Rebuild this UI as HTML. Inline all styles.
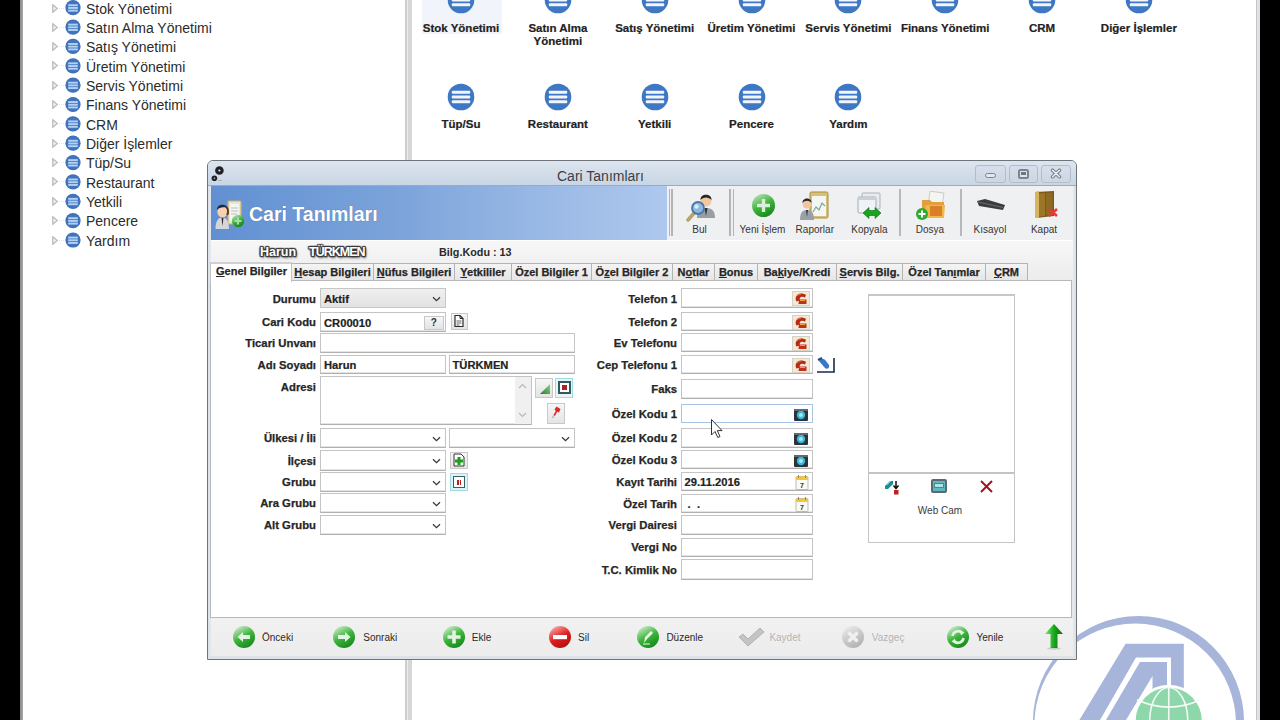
<!DOCTYPE html><html><head><meta charset="utf-8"><title>Cari Tanımları</title><style>
*{box-sizing:border-box;margin:0;padding:0}
html,body{width:1280px;height:720px;overflow:hidden;background:#fff;font-family:"Liberation Sans",sans-serif;color:#222}
.a{position:absolute}
.tr{position:absolute;left:0;height:20px;width:380px}
.tr .tri{position:absolute;left:52px;top:6px;width:6px;height:9px}
.tr .dot{position:absolute;left:59px;top:10px;width:5px;border-top:1px dotted #e4e4e4}
.tr .ic{position:absolute;left:65.5px;top:2.6px;width:15.2px;height:15.2px;border-radius:50%;background:radial-gradient(circle at 50% 45%,#4378c0 55%,#30619f 100%)}
.tr .ic i{position:absolute;left:2.6px;width:10px;height:2px;background:#b0d2f6}
.tr .tx{position:absolute;left:86px;top:1px;font-size:14px;line-height:20px;color:#2b2b2b;white-space:nowrap}
.gi{position:absolute;width:0;height:0}
.gi .ic{position:absolute;left:-13px;top:-13px;width:26px;height:26px;border-radius:50%;background:#3e77c3}
.gi .ic i{position:absolute;left:4px;width:18px;height:3px;background:#f0f4fb}
.gi .lb{position:absolute;left:-60px;width:120px;text-align:center;font-size:11.5px;font-weight:bold;line-height:13px;color:#222;-webkit-text-stroke:0.2px #222;white-space:nowrap}
.lbl{position:absolute;font-size:11.3px;font-weight:bold;color:#262626;-webkit-text-stroke:0.25px #262626;text-align:right;white-space:nowrap;line-height:14px}
.inp{position:absolute;background:#fff;border:1px solid #c4c4c4;border-bottom-color:#b0b0b0;box-shadow:inset 0 -1px 0 #e4e4e4}
.val{position:absolute;left:3px;top:3px;font-size:11.2px;font-weight:bold;color:#222;-webkit-text-stroke:0.2px #222;line-height:13px;white-space:nowrap}
.chev{position:absolute;right:4px;top:7px;width:9px;height:6px}
.tab{position:absolute;top:263px;height:17px;border:1px solid #b4b4b4;border-bottom:none;background:linear-gradient(#f4f4f4,#e6e6e6);font-size:11px;font-weight:bold;color:#262626;-webkit-text-stroke:0.25px #262626;text-align:center;line-height:16px;white-space:nowrap}
.tab u{text-decoration:underline}
.tb{position:absolute;top:186px;height:54px;text-align:center}
.tbl{position:absolute;font-size:10px;color:#333;white-space:nowrap;line-height:12px;text-align:center}
.bb{position:absolute;font-size:10px;color:#2a2a2a;white-space:nowrap;line-height:12px}
.btn{position:absolute;border:1px solid #c8c8c8;background:linear-gradient(#f6f6f6,#e4e4e4)}
</style></head><body>
<div class="a" style="left:0;top:0;width:20px;height:720px;background:#000"></div>
<div class="a" style="left:20px;top:0;width:3px;height:720px;background:linear-gradient(90deg,#8c8c8c,#a6a6a6)"></div>
<div class="a" style="left:1260px;top:0;width:20px;height:720px;background:#000"></div>
<div class="a" style="left:1256px;top:0;width:1px;height:720px;background:#c4c4c8"></div>
<div class="a" style="left:1257px;top:0;width:3px;height:720px;background:#e0e0e4"></div>
<div class="a" style="left:405px;top:0;width:2px;height:720px;background:#cdcdcd"></div>
<div class="a" style="left:407px;top:0;width:1px;height:720px;background:#ededed"></div>
<div class="a" style="left:408px;top:0;width:4px;height:720px;background:#d7d7d7"></div>
<div class="tr" style="top:-2.00px"><svg class="tri" viewBox="0 0 6 9"><path d="M0.8 0.8 L5.2 4.5 L0.8 8.2 Z" fill="#f4f4f4" stroke="#bdbdbd" stroke-width="1.4"/></svg><div class="dot"></div><svg style="position:absolute;left:63px;top:0" width="20" height="20" viewBox="0 0 20 20"><circle cx="10" cy="9.70" r="7.6" fill="#3d6fb6"/><circle cx="10" cy="9.70" r="7" fill="#4274bd"/><rect x="5.2" y="6.30" width="9.6" height="1.9" fill="#b2d3f6"/><rect x="5.2" y="9.00" width="9.6" height="1.9" fill="#b2d3f6"/><rect x="5.2" y="11.70" width="9.6" height="1.9" fill="#b2d3f6"/></svg><div class="tx" style="top:0.50px">Stok Yönetimi</div></div>
<div class="tr" style="top:17.00px"><svg class="tri" viewBox="0 0 6 9"><path d="M0.8 0.8 L5.2 4.5 L0.8 8.2 Z" fill="#f4f4f4" stroke="#bdbdbd" stroke-width="1.4"/></svg><div class="dot"></div><svg style="position:absolute;left:63px;top:0" width="20" height="20" viewBox="0 0 20 20"><circle cx="10" cy="10.06" r="7.6" fill="#3d6fb6"/><circle cx="10" cy="10.06" r="7" fill="#4274bd"/><rect x="5.2" y="6.66" width="9.6" height="1.9" fill="#b2d3f6"/><rect x="5.2" y="9.36" width="9.6" height="1.9" fill="#b2d3f6"/><rect x="5.2" y="12.06" width="9.6" height="1.9" fill="#b2d3f6"/></svg><div class="tx" style="top:0.86px">Satın Alma Yönetimi</div></div>
<div class="tr" style="top:36.00px"><svg class="tri" viewBox="0 0 6 9"><path d="M0.8 0.8 L5.2 4.5 L0.8 8.2 Z" fill="#f4f4f4" stroke="#bdbdbd" stroke-width="1.4"/></svg><div class="dot"></div><svg style="position:absolute;left:63px;top:0" width="20" height="20" viewBox="0 0 20 20"><circle cx="10" cy="10.42" r="7.6" fill="#3d6fb6"/><circle cx="10" cy="10.42" r="7" fill="#4274bd"/><rect x="5.2" y="7.02" width="9.6" height="1.9" fill="#b2d3f6"/><rect x="5.2" y="9.72" width="9.6" height="1.9" fill="#b2d3f6"/><rect x="5.2" y="12.42" width="9.6" height="1.9" fill="#b2d3f6"/></svg><div class="tx" style="top:1.22px">Satış Yönetimi</div></div>
<div class="tr" style="top:55.00px"><svg class="tri" viewBox="0 0 6 9"><path d="M0.8 0.8 L5.2 4.5 L0.8 8.2 Z" fill="#f4f4f4" stroke="#bdbdbd" stroke-width="1.4"/></svg><div class="dot"></div><svg style="position:absolute;left:63px;top:0" width="20" height="20" viewBox="0 0 20 20"><circle cx="10" cy="10.78" r="7.6" fill="#3d6fb6"/><circle cx="10" cy="10.78" r="7" fill="#4274bd"/><rect x="5.2" y="7.38" width="9.6" height="1.9" fill="#b2d3f6"/><rect x="5.2" y="10.08" width="9.6" height="1.9" fill="#b2d3f6"/><rect x="5.2" y="12.78" width="9.6" height="1.9" fill="#b2d3f6"/></svg><div class="tx" style="top:1.58px">Üretim Yönetimi</div></div>
<div class="tr" style="top:75.00px"><svg class="tri" viewBox="0 0 6 9"><path d="M0.8 0.8 L5.2 4.5 L0.8 8.2 Z" fill="#f4f4f4" stroke="#bdbdbd" stroke-width="1.4"/></svg><div class="dot"></div><svg style="position:absolute;left:63px;top:0" width="20" height="20" viewBox="0 0 20 20"><circle cx="10" cy="10.14" r="7.6" fill="#3d6fb6"/><circle cx="10" cy="10.14" r="7" fill="#4274bd"/><rect x="5.2" y="6.74" width="9.6" height="1.9" fill="#b2d3f6"/><rect x="5.2" y="9.44" width="9.6" height="1.9" fill="#b2d3f6"/><rect x="5.2" y="12.14" width="9.6" height="1.9" fill="#b2d3f6"/></svg><div class="tx" style="top:0.94px">Servis Yönetimi</div></div>
<div class="tr" style="top:94.00px"><svg class="tri" viewBox="0 0 6 9"><path d="M0.8 0.8 L5.2 4.5 L0.8 8.2 Z" fill="#f4f4f4" stroke="#bdbdbd" stroke-width="1.4"/></svg><div class="dot"></div><svg style="position:absolute;left:63px;top:0" width="20" height="20" viewBox="0 0 20 20"><circle cx="10" cy="10.50" r="7.6" fill="#3d6fb6"/><circle cx="10" cy="10.50" r="7" fill="#4274bd"/><rect x="5.2" y="7.10" width="9.6" height="1.9" fill="#b2d3f6"/><rect x="5.2" y="9.80" width="9.6" height="1.9" fill="#b2d3f6"/><rect x="5.2" y="12.50" width="9.6" height="1.9" fill="#b2d3f6"/></svg><div class="tx" style="top:1.30px">Finans Yönetimi</div></div>
<div class="tr" style="top:113.00px"><svg class="tri" viewBox="0 0 6 9"><path d="M0.8 0.8 L5.2 4.5 L0.8 8.2 Z" fill="#f4f4f4" stroke="#bdbdbd" stroke-width="1.4"/></svg><div class="dot"></div><svg style="position:absolute;left:63px;top:0" width="20" height="20" viewBox="0 0 20 20"><circle cx="10" cy="10.86" r="7.6" fill="#3d6fb6"/><circle cx="10" cy="10.86" r="7" fill="#4274bd"/><rect x="5.2" y="7.46" width="9.6" height="1.9" fill="#b2d3f6"/><rect x="5.2" y="10.16" width="9.6" height="1.9" fill="#b2d3f6"/><rect x="5.2" y="12.86" width="9.6" height="1.9" fill="#b2d3f6"/></svg><div class="tx" style="top:1.66px">CRM</div></div>
<div class="tr" style="top:133.00px"><svg class="tri" viewBox="0 0 6 9"><path d="M0.8 0.8 L5.2 4.5 L0.8 8.2 Z" fill="#f4f4f4" stroke="#bdbdbd" stroke-width="1.4"/></svg><div class="dot"></div><svg style="position:absolute;left:63px;top:0" width="20" height="20" viewBox="0 0 20 20"><circle cx="10" cy="10.22" r="7.6" fill="#3d6fb6"/><circle cx="10" cy="10.22" r="7" fill="#4274bd"/><rect x="5.2" y="6.82" width="9.6" height="1.9" fill="#b2d3f6"/><rect x="5.2" y="9.52" width="9.6" height="1.9" fill="#b2d3f6"/><rect x="5.2" y="12.22" width="9.6" height="1.9" fill="#b2d3f6"/></svg><div class="tx" style="top:1.02px">Diğer İşlemler</div></div>
<div class="tr" style="top:152.00px"><svg class="tri" viewBox="0 0 6 9"><path d="M0.8 0.8 L5.2 4.5 L0.8 8.2 Z" fill="#f4f4f4" stroke="#bdbdbd" stroke-width="1.4"/></svg><div class="dot"></div><svg style="position:absolute;left:63px;top:0" width="20" height="20" viewBox="0 0 20 20"><circle cx="10" cy="10.58" r="7.6" fill="#3d6fb6"/><circle cx="10" cy="10.58" r="7" fill="#4274bd"/><rect x="5.2" y="7.18" width="9.6" height="1.9" fill="#b2d3f6"/><rect x="5.2" y="9.88" width="9.6" height="1.9" fill="#b2d3f6"/><rect x="5.2" y="12.58" width="9.6" height="1.9" fill="#b2d3f6"/></svg><div class="tx" style="top:1.38px">Tüp/Su</div></div>
<div class="tr" style="top:171.00px"><svg class="tri" viewBox="0 0 6 9"><path d="M0.8 0.8 L5.2 4.5 L0.8 8.2 Z" fill="#f4f4f4" stroke="#bdbdbd" stroke-width="1.4"/></svg><div class="dot"></div><svg style="position:absolute;left:63px;top:0" width="20" height="20" viewBox="0 0 20 20"><circle cx="10" cy="10.94" r="7.6" fill="#3d6fb6"/><circle cx="10" cy="10.94" r="7" fill="#4274bd"/><rect x="5.2" y="7.54" width="9.6" height="1.9" fill="#b2d3f6"/><rect x="5.2" y="10.24" width="9.6" height="1.9" fill="#b2d3f6"/><rect x="5.2" y="12.94" width="9.6" height="1.9" fill="#b2d3f6"/></svg><div class="tx" style="top:1.74px">Restaurant</div></div>
<div class="tr" style="top:191.00px"><svg class="tri" viewBox="0 0 6 9"><path d="M0.8 0.8 L5.2 4.5 L0.8 8.2 Z" fill="#f4f4f4" stroke="#bdbdbd" stroke-width="1.4"/></svg><div class="dot"></div><svg style="position:absolute;left:63px;top:0" width="20" height="20" viewBox="0 0 20 20"><circle cx="10" cy="10.30" r="7.6" fill="#3d6fb6"/><circle cx="10" cy="10.30" r="7" fill="#4274bd"/><rect x="5.2" y="6.90" width="9.6" height="1.9" fill="#b2d3f6"/><rect x="5.2" y="9.60" width="9.6" height="1.9" fill="#b2d3f6"/><rect x="5.2" y="12.30" width="9.6" height="1.9" fill="#b2d3f6"/></svg><div class="tx" style="top:1.10px">Yetkili</div></div>
<div class="tr" style="top:210.00px"><svg class="tri" viewBox="0 0 6 9"><path d="M0.8 0.8 L5.2 4.5 L0.8 8.2 Z" fill="#f4f4f4" stroke="#bdbdbd" stroke-width="1.4"/></svg><div class="dot"></div><svg style="position:absolute;left:63px;top:0" width="20" height="20" viewBox="0 0 20 20"><circle cx="10" cy="10.66" r="7.6" fill="#3d6fb6"/><circle cx="10" cy="10.66" r="7" fill="#4274bd"/><rect x="5.2" y="7.26" width="9.6" height="1.9" fill="#b2d3f6"/><rect x="5.2" y="9.96" width="9.6" height="1.9" fill="#b2d3f6"/><rect x="5.2" y="12.66" width="9.6" height="1.9" fill="#b2d3f6"/></svg><div class="tx" style="top:1.46px">Pencere</div></div>
<div class="tr" style="top:230.00px"><svg class="tri" viewBox="0 0 6 9"><path d="M0.8 0.8 L5.2 4.5 L0.8 8.2 Z" fill="#f4f4f4" stroke="#bdbdbd" stroke-width="1.4"/></svg><div class="dot"></div><svg style="position:absolute;left:63px;top:0" width="20" height="20" viewBox="0 0 20 20"><circle cx="10" cy="10.02" r="7.6" fill="#3d6fb6"/><circle cx="10" cy="10.02" r="7" fill="#4274bd"/><rect x="5.2" y="6.62" width="9.6" height="1.9" fill="#b2d3f6"/><rect x="5.2" y="9.32" width="9.6" height="1.9" fill="#b2d3f6"/><rect x="5.2" y="12.02" width="9.6" height="1.9" fill="#b2d3f6"/></svg><div class="tx" style="top:0.82px">Yardım</div></div>
<div class="a" style="left:422px;top:0;width:80px;height:34px;background:#f1f4fa"></div>
<div class="gi" style="left:461.0px;top:-0.5px"><svg style="position:absolute;left:-15px;top:-15px" width="30" height="30" viewBox="-15 -15 30 30"><circle cx="0" cy="0" r="13.3" fill="#3e77c3"/><rect x="-9.2" y="-6.2" width="18.4" height="3" rx="1" fill="#f2f6fc"/><rect x="-9.2" y="-1.5" width="18.4" height="3" rx="1" fill="#f2f6fc"/><rect x="-9.2" y="3.2" width="18.4" height="3" rx="1" fill="#f2f6fc"/></svg><div class="lb" style="top:22.3px">Stok Yönetimi</div></div>
<div class="gi" style="left:557.9px;top:-0.5px"><svg style="position:absolute;left:-15px;top:-15px" width="30" height="30" viewBox="-15 -15 30 30"><circle cx="0" cy="0" r="13.3" fill="#3e77c3"/><rect x="-9.2" y="-6.2" width="18.4" height="3" rx="1" fill="#f2f6fc"/><rect x="-9.2" y="-1.5" width="18.4" height="3" rx="1" fill="#f2f6fc"/><rect x="-9.2" y="3.2" width="18.4" height="3" rx="1" fill="#f2f6fc"/></svg><div class="lb" style="top:22.3px">Satın Alma<br>Yönetimi</div></div>
<div class="gi" style="left:654.7px;top:-0.5px"><svg style="position:absolute;left:-15px;top:-15px" width="30" height="30" viewBox="-15 -15 30 30"><circle cx="0" cy="0" r="13.3" fill="#3e77c3"/><rect x="-9.2" y="-6.2" width="18.4" height="3" rx="1" fill="#f2f6fc"/><rect x="-9.2" y="-1.5" width="18.4" height="3" rx="1" fill="#f2f6fc"/><rect x="-9.2" y="3.2" width="18.4" height="3" rx="1" fill="#f2f6fc"/></svg><div class="lb" style="top:22.3px">Satış Yönetimi</div></div>
<div class="gi" style="left:751.5px;top:-0.5px"><svg style="position:absolute;left:-15px;top:-15px" width="30" height="30" viewBox="-15 -15 30 30"><circle cx="0" cy="0" r="13.3" fill="#3e77c3"/><rect x="-9.2" y="-6.2" width="18.4" height="3" rx="1" fill="#f2f6fc"/><rect x="-9.2" y="-1.5" width="18.4" height="3" rx="1" fill="#f2f6fc"/><rect x="-9.2" y="3.2" width="18.4" height="3" rx="1" fill="#f2f6fc"/></svg><div class="lb" style="top:22.3px">Üretim Yönetimi</div></div>
<div class="gi" style="left:848.4px;top:-0.5px"><svg style="position:absolute;left:-15px;top:-15px" width="30" height="30" viewBox="-15 -15 30 30"><circle cx="0" cy="0" r="13.3" fill="#3e77c3"/><rect x="-9.2" y="-6.2" width="18.4" height="3" rx="1" fill="#f2f6fc"/><rect x="-9.2" y="-1.5" width="18.4" height="3" rx="1" fill="#f2f6fc"/><rect x="-9.2" y="3.2" width="18.4" height="3" rx="1" fill="#f2f6fc"/></svg><div class="lb" style="top:22.3px">Servis Yönetimi</div></div>
<div class="gi" style="left:945.2px;top:-0.5px"><svg style="position:absolute;left:-15px;top:-15px" width="30" height="30" viewBox="-15 -15 30 30"><circle cx="0" cy="0" r="13.3" fill="#3e77c3"/><rect x="-9.2" y="-6.2" width="18.4" height="3" rx="1" fill="#f2f6fc"/><rect x="-9.2" y="-1.5" width="18.4" height="3" rx="1" fill="#f2f6fc"/><rect x="-9.2" y="3.2" width="18.4" height="3" rx="1" fill="#f2f6fc"/></svg><div class="lb" style="top:22.3px">Finans Yönetimi</div></div>
<div class="gi" style="left:1042.1px;top:-0.5px"><svg style="position:absolute;left:-15px;top:-15px" width="30" height="30" viewBox="-15 -15 30 30"><circle cx="0" cy="0" r="13.3" fill="#3e77c3"/><rect x="-9.2" y="-6.2" width="18.4" height="3" rx="1" fill="#f2f6fc"/><rect x="-9.2" y="-1.5" width="18.4" height="3" rx="1" fill="#f2f6fc"/><rect x="-9.2" y="3.2" width="18.4" height="3" rx="1" fill="#f2f6fc"/></svg><div class="lb" style="top:22.3px">CRM</div></div>
<div class="gi" style="left:1138.9px;top:-0.5px"><svg style="position:absolute;left:-15px;top:-15px" width="30" height="30" viewBox="-15 -15 30 30"><circle cx="0" cy="0" r="13.3" fill="#3e77c3"/><rect x="-9.2" y="-6.2" width="18.4" height="3" rx="1" fill="#f2f6fc"/><rect x="-9.2" y="-1.5" width="18.4" height="3" rx="1" fill="#f2f6fc"/><rect x="-9.2" y="3.2" width="18.4" height="3" rx="1" fill="#f2f6fc"/></svg><div class="lb" style="top:22.3px">Diğer İşlemler</div></div>
<div class="gi" style="left:461.0px;top:96.7px"><svg style="position:absolute;left:-15px;top:-15px" width="30" height="30" viewBox="-15 -15 30 30"><circle cx="0" cy="0" r="13.3" fill="#3e77c3"/><rect x="-9.2" y="-6.2" width="18.4" height="3" rx="1" fill="#f2f6fc"/><rect x="-9.2" y="-1.5" width="18.4" height="3" rx="1" fill="#f2f6fc"/><rect x="-9.2" y="3.2" width="18.4" height="3" rx="1" fill="#f2f6fc"/></svg><div class="lb" style="top:21.8px">Tüp/Su</div></div>
<div class="gi" style="left:557.9px;top:96.7px"><svg style="position:absolute;left:-15px;top:-15px" width="30" height="30" viewBox="-15 -15 30 30"><circle cx="0" cy="0" r="13.3" fill="#3e77c3"/><rect x="-9.2" y="-6.2" width="18.4" height="3" rx="1" fill="#f2f6fc"/><rect x="-9.2" y="-1.5" width="18.4" height="3" rx="1" fill="#f2f6fc"/><rect x="-9.2" y="3.2" width="18.4" height="3" rx="1" fill="#f2f6fc"/></svg><div class="lb" style="top:21.8px">Restaurant</div></div>
<div class="gi" style="left:654.7px;top:96.7px"><svg style="position:absolute;left:-15px;top:-15px" width="30" height="30" viewBox="-15 -15 30 30"><circle cx="0" cy="0" r="13.3" fill="#3e77c3"/><rect x="-9.2" y="-6.2" width="18.4" height="3" rx="1" fill="#f2f6fc"/><rect x="-9.2" y="-1.5" width="18.4" height="3" rx="1" fill="#f2f6fc"/><rect x="-9.2" y="3.2" width="18.4" height="3" rx="1" fill="#f2f6fc"/></svg><div class="lb" style="top:21.8px">Yetkili</div></div>
<div class="gi" style="left:751.5px;top:96.7px"><svg style="position:absolute;left:-15px;top:-15px" width="30" height="30" viewBox="-15 -15 30 30"><circle cx="0" cy="0" r="13.3" fill="#3e77c3"/><rect x="-9.2" y="-6.2" width="18.4" height="3" rx="1" fill="#f2f6fc"/><rect x="-9.2" y="-1.5" width="18.4" height="3" rx="1" fill="#f2f6fc"/><rect x="-9.2" y="3.2" width="18.4" height="3" rx="1" fill="#f2f6fc"/></svg><div class="lb" style="top:21.8px">Pencere</div></div>
<div class="gi" style="left:848.4px;top:96.7px"><svg style="position:absolute;left:-15px;top:-15px" width="30" height="30" viewBox="-15 -15 30 30"><circle cx="0" cy="0" r="13.3" fill="#3e77c3"/><rect x="-9.2" y="-6.2" width="18.4" height="3" rx="1" fill="#f2f6fc"/><rect x="-9.2" y="-1.5" width="18.4" height="3" rx="1" fill="#f2f6fc"/><rect x="-9.2" y="3.2" width="18.4" height="3" rx="1" fill="#f2f6fc"/></svg><div class="lb" style="top:21.8px">Yardım</div></div>
<svg class="a" style="left:1000px;top:590px" width="260" height="130" viewBox="1000 590 260 130">
<path fill-rule="evenodd" fill="#a6b5d9" d="M 1033.0 721.5 a 105.5 105.5 0 1 0 211 0 a 105.5 105.5 0 1 0 -211 0 Z M 1034.5 724.25 a 100.75 100.75 0 1 0 201.5 0 a 100.75 100.75 0 1 0 -201.5 0 Z"/>
<path fill="#a6b5d9" d="M1125.6 643.7 L1183.8 643.7 L1183.8 690 L1171 690 L1171 657.5 L1136 657.5 L1100 720 L1079.4 720 Z"/>
<path fill="#a6b5d9" d="M1140 662 L1167 662 L1167 690 L1152.5 690 L1152.5 676 L1126 720 L1106 720 Z"/>
<circle cx="1168.75" cy="720.5" r="35.8" fill="#fff"/>
<circle cx="1168.75" cy="720.5" r="33" fill="#8dd7ab"/>
<g fill="none" stroke="#f4fbf6" stroke-width="1.6">
<path d="M1168.75 687 V720"/>
<ellipse cx="1168.75" cy="720.5" rx="19" ry="33"/>
<path d="M1137 699.7 Q1168.75 714.5 1200.5 699.7"/>
</g>
</svg>
<div class="a" style="left:207px;top:160px;width:870px;height:500px;border:1px solid #6f747a;border-radius:6px 6px 0 0;background:#e2e6eb"></div>
<div class="a" style="left:208px;top:161px;width:868px;height:25px;border-radius:5px 5px 0 0;background:linear-gradient(#dde5ef,#d0dbe8 60%,#c8d5e4)"></div>
<div class="a" style="left:208px;top:185px;width:868px;height:1px;background:#9aabc0"></div>
<div class="a" style="left:208px;top:186px;width:3px;height:473px;background:linear-gradient(90deg,#d9e0e8,#e6e9ee)"></div>
<div class="a" style="left:1073px;top:186px;width:3px;height:473px;background:linear-gradient(90deg,#e6e9ee,#d9e0e8)"></div>
<div class="a" style="left:208px;top:656px;width:868px;height:3px;background:#dfe3e8"></div>
<svg class="a" style="left:210px;top:165px" width="16" height="18" viewBox="0 0 16 18"><circle cx="9.4" cy="5.5" r="4.3" fill="#1e2228"/><circle cx="9.4" cy="5.5" r="1.1" fill="#dfe6ee"/><circle cx="4.4" cy="13.3" r="2.8" fill="#1e2228"/><circle cx="4.4" cy="13.3" r="0.8" fill="#b8c4d2"/><rect x="8" y="15" width="4" height="1" fill="#a8b0ba"/></svg>
<div class="a" style="left:540px;top:167.5px;width:150px;font-size:14px;line-height:17px;color:#3a3f46;white-space:nowrap;text-align:left;padding-left:17px">Cari Tanımları</div>
<div class="a" style="left:975px;top:165px;width:31px;height:18px;border:1px solid #b2bdca;border-radius:3px;background:linear-gradient(#d6dfea,#ccd7e4)"></div>
<div class="a" style="left:1009px;top:165px;width:29px;height:18px;border:1px solid #b2bdca;border-radius:3px;background:linear-gradient(#d6dfea,#ccd7e4)"></div>
<div class="a" style="left:1041px;top:165px;width:30px;height:18px;border:1px solid #b2bdca;border-radius:3px;background:linear-gradient(#d6dfea,#ccd7e4)"></div>
<div class="a" style="left:984.5px;top:172.5px;width:11.5px;height:5.5px;border:1.6px solid #7c838c;border-radius:3px;background:#e4e8ec"></div>
<div class="a" style="left:1017.5px;top:169px;width:11.5px;height:9.5px;border:2px solid #7c838c;border-radius:2.5px;background:#e0e4e8"></div>
<div class="a" style="left:1021px;top:172px;width:4.5px;height:3px;background:#70767e"></div>
<svg class="a" style="left:1050px;top:168px" width="12" height="11" viewBox="0 0 12 11"><path d="M2.6 2.2 L9.4 8.8 M9.4 2.2 L2.6 8.8" stroke="#7c838c" stroke-width="3.6" stroke-linecap="round"/><path d="M2.6 2.2 L9.4 8.8 M9.4 2.2 L2.6 8.8" stroke="#eef1f4" stroke-width="1.4" stroke-linecap="round"/></svg>
<div class="a" style="left:211px;top:186px;width:456px;height:54px;background:linear-gradient(90deg,#6190d2 0%,#7ba3da 40%,#97b7e4 70%,#aec8ee 100%)"></div>
<div class="a" style="left:249px;top:201.5px;font-size:19.5px;font-weight:bold;color:#fff;line-height:24px;white-space:nowrap;text-shadow:0 0 1px rgba(40,60,110,.5)">Cari Tanımları</div>
<svg class="a" style="left:214px;top:199px" width="30" height="32" viewBox="0 0 30 32">
<defs><linearGradient id="hg" x1="0.2" y1="0" x2="0.75" y2="1"><stop offset="0" stop-color="#c0e4c0"/><stop offset=".5" stop-color="#38b038"/><stop offset="1" stop-color="#128016"/></linearGradient></defs>
<rect x="14" y="2" width="13" height="23" rx="1" fill="#ece6c8" stroke="#c8b070" stroke-width="1.2"/>
<rect x="16" y="5" width="9" height="17" fill="#f4f6f4"/>
<path d="M17 9h7M17 12h7M17 15h6" stroke="#b8c0c0" stroke-width="1"/>
<path d="M1.5 30 C1.5 21 5 18.5 8 18.5 C11 18.5 15 20 15 30 Z" fill="#d4d6d8"/>
<path d="M7.5 18.5 L8.5 27 L9.5 18.5 Z" fill="#2a2a30"/>
<ellipse cx="8.5" cy="12.5" rx="5.2" ry="6" fill="#f6d0b4"/>
<path d="M3 11 C2.5 4.5 13 4 14 10 C11.5 7.5 6 7.5 3 11Z" fill="#1e2a3e"/>
<path d="M12.5 8.5 C14.5 10 14.5 14 13 16" stroke="#5a3a20" stroke-width="2" fill="none"/>
<circle cx="24" cy="22" r="6.2" fill="url(#hg)"/>
<path d="M24 18.5v7M20.5 22h7" stroke="#a8dca8" stroke-width="2.2"/>
</svg>
<div class="a" style="left:667px;top:186px;width:406px;height:54px;background:#eff0f2"></div>
<div class="a" style="left:211px;top:240px;width:862px;height:1px;background:#ffffff"></div>
<div class="a" style="left:668.5px;top:189px;width:1.5px;height:47px;background:#b4b4b4"></div>
<div class="a" style="left:671px;top:189px;width:1.5px;height:47px;background:#b4b4b4"></div>
<div class="a" style="left:729px;top:189px;width:1.5px;height:47px;background:#b4b4b4"></div>
<div class="a" style="left:732.5px;top:189px;width:1.5px;height:47px;background:#b4b4b4"></div>
<div class="a" style="left:899px;top:189px;width:1.5px;height:47px;background:#b8b8b8"></div>
<div class="a" style="left:960px;top:189px;width:1.5px;height:47px;background:#b8b8b8"></div>
<div class="tbl" style="left:659.5px;width:80px;top:224px">Bul</div>
<div class="tbl" style="left:722.5px;width:80px;top:224px">Yeni İşlem</div>
<div class="tbl" style="left:774.8px;width:80px;top:224px">Raporlar</div>
<div class="tbl" style="left:829.4px;width:80px;top:224px">Kopyala</div>
<div class="tbl" style="left:890px;width:80px;top:224px">Dosya</div>
<div class="tbl" style="left:950px;width:80px;top:224px">Kısayol</div>
<div class="tbl" style="left:1004px;width:80px;top:224px">Kapat</div>
<svg class="a" style="left:684px;top:190px" width="32" height="32" viewBox="0 0 32 32">
<path d="M13 28 C13 20 17 18 22 18 C27 18 31 20 31 28 Z" fill="#9a9ea4"/>
<path d="M20.5 18 L22 26 L23.5 18 Z" fill="#333"/>
<circle cx="22" cy="11" r="5.5" fill="#f1c7a2"/>
<path d="M16.5 10 C16 3 28 3 27.5 10 C25 6.5 19 6.5 16.5 10Z" fill="#262626"/>
<path d="M4 30 L11 22" stroke="#b8a46a" stroke-width="3.5" stroke-linecap="round"/>
<circle cx="14" cy="18" r="6" fill="#8fb8e0" stroke="#4a78a8" stroke-width="1.8"/>
<circle cx="12.5" cy="16.5" r="2.2" fill="#d8ecfa"/>
</svg>
<svg class="a" style="left:751px;top:193px" width="25" height="25" viewBox="0 0 25 25">
<defs><linearGradient id="gg" x1="0.2" y1="0" x2="0.75" y2="1"><stop offset="0" stop-color="#b8e0b8"/><stop offset=".5" stop-color="#3cb43a"/><stop offset="1" stop-color="#13861a"/></linearGradient></defs>
<circle cx="12.5" cy="12.5" r="11.5" fill="url(#gg)"/>
<path d="M12.5 6v13M6 12.5h13" stroke="#d8f0d8" stroke-width="3.4"/>
</svg>
<svg class="a" style="left:799px;top:190px" width="32" height="32" viewBox="0 0 32 32">
<rect x="11" y="2" width="18" height="26" rx="1.5" fill="#d9c07a" stroke="#a88d42" stroke-width="1"/>
<rect x="13" y="6" width="14" height="20" fill="#f4f6f4"/>
<path d="M14 22 L17 17 L20 20 L23 13 L26 16" stroke="#7a9" stroke-width="1.2" fill="none"/>
<path d="M1 30 C1 22 4 20 8 20 C12 20 15 22 15 30 Z" fill="#9ba0a6"/>
<path d="M7 20 L8 27 L9 20 Z" fill="#333"/>
<circle cx="8" cy="14" r="4.5" fill="#f0c5a0"/>
<path d="M3.5 13 C3 7 13 7 12.5 13 C10.5 10 5.5 10 3.5 13Z" fill="#262626"/>
</svg>
<svg class="a" style="left:853px;top:191px" width="32" height="30" viewBox="0 0 32 30">
<rect x="9" y="2" width="18" height="16" rx="1" fill="#e8ecf0" stroke="#aab2ba"/>
<rect x="5" y="6" width="18" height="16" rx="1" fill="#f0f3f6" stroke="#a4acb4"/>
<rect x="5" y="6" width="18" height="3" fill="#c8d0d8"/>
<path d="M10 22 L16 16.5 L16 19.5 L22 19.5 L22 16.5 L28 22 L22 27.5 L22 24.5 L16 24.5 L16 27.5 Z" fill="#18a41c" stroke="#0b6a10" stroke-width=".6"/>
</svg>
<svg class="a" style="left:913px;top:191px" width="34" height="30" viewBox="0 0 34 30">
<rect x="16" y="1" width="14" height="14" fill="#f4f4f0" stroke="#ccc" transform="rotate(8 23 8)"/>
<path d="M9 9 L17 9 L19 11 L31 11 L31 27 L9 27 Z" fill="#e0a040"/>
<path d="M13 14 L32 14 L31 27 L9 27 Z" fill="#f0b848"/>
<rect x="17" y="15" width="12" height="10" fill="#d47020" opacity=".8"/>
<circle cx="9" cy="23" r="6" fill="#2eaa30"/>
<path d="M9 19.5v7M5.5 23h7" stroke="#fff" stroke-width="2"/>
</svg>
<svg class="a" style="left:975px;top:197px" width="32" height="16" viewBox="0 0 32 16">
<path d="M2 4 L10 2 L30 8 L28 13 L4 9 Z" fill="#3c3c3c"/>
<path d="M3 5 L28 10.5" stroke="#6a6a6a" stroke-width="1.2"/>
</svg>
<svg class="a" style="left:1032px;top:190px" width="28" height="30" viewBox="0 0 28 30">
<path d="M4 2 L22 1 L22 26 L4 28 Z" fill="#7a5a1c"/>
<path d="M7 3.5 L13 3 L13 26 L7 26.5Z" fill="#9c7628"/>
<path d="M14 3 L20.5 2.5 L20.5 25 L14 25.5Z" fill="#8e6a22"/>
<path d="M3 2 L7 1 L7 28 L3 28Z" fill="#d8b460"/>
<path d="M17 19 L25 26 M25 19 L17 26" stroke="#e8383a" stroke-width="2.6"/>
</svg>
<div class="a" style="left:211px;top:241px;width:862px;height:40px;background:linear-gradient(#f7f7f7,#ececec)"></div>
<div class="a" style="left:260px;top:244.5px;font-size:12.5px;font-weight:bold;color:#fff;line-height:14px;white-space:nowrap;text-shadow:-1px -1px 1px #3a3a3a,-1px 0px 1px #3a3a3a,-1px 1px 1px #3a3a3a,0px -1px 1px #3a3a3a,0px 1px 1px #3a3a3a,1px -1px 1px #3a3a3a,1px 0px 1px #3a3a3a,1px 1px 1px #3a3a3a,1px 2px 2.5px #555;">Harun</div>
<div class="a" style="left:309px;top:244.5px;font-size:12.5px;font-weight:bold;color:#fff;line-height:14px;white-space:nowrap;text-shadow:-1px -1px 1px #3a3a3a,-1px 0px 1px #3a3a3a,-1px 1px 1px #3a3a3a,0px -1px 1px #3a3a3a,0px 1px 1px #3a3a3a,1px -1px 1px #3a3a3a,1px 0px 1px #3a3a3a,1px 1px 1px #3a3a3a,1px 2px 2.5px #555;letter-spacing:-1px">TÜRKMEN</div>
<div class="a" style="left:439px;top:245px;font-size:10.8px;font-weight:bold;color:#2a2a2a;line-height:14px;white-space:nowrap">Bilg.Kodu : 13</div>
<div class="a" style="left:210px;top:280px;width:862px;height:338px;background:#fff;border:1px solid #b8b8b8"></div>
<div class="tab" style="left:210px;top:262px;width:82px;height:20px;background:#fff;border-color:#c4c4c4;border-top:2px solid #d0d0d0;line-height:15px;z-index:2;padding-left:1px"><u>G</u>enel Bilgiler</div>
<div class="tab" style="left:291px;width:83px;line-height:17px"><u>H</u>esap Bilgileri</div>
<div class="tab" style="left:373px;width:82px;line-height:17px"><u>N</u>üfus Bilgileri</div>
<div class="tab" style="left:454px;width:58px;line-height:17px"><u>Y</u>etkililer</div>
<div class="tab" style="left:511px;width:81px;line-height:17px">Özel Bilgiler 1</div>
<div class="tab" style="left:591px;width:82px;line-height:17px">Ö<u>z</u>el Bilgiler 2</div>
<div class="tab" style="left:672px;width:43px;line-height:17px">N<u>o</u>tlar</div>
<div class="tab" style="left:714px;width:44px;line-height:17px"><u>B</u>onus</div>
<div class="tab" style="left:757px;width:80px;line-height:17px">Ba<u>k</u>iye/Kredi</div>
<div class="tab" style="left:836px;width:67px;line-height:17px"><u>S</u>ervis Bilg.</div>
<div class="tab" style="left:902px;width:84px;line-height:17px">Özel Tan<u>ı</u>mlar</div>
<div class="tab" style="left:985px;width:43px;line-height:17px"><u>Ç</u>RM</div>
<div class="a" style="left:211px;top:618px;width:862px;height:38px;background:linear-gradient(#f1f1f1,#ececec)"></div>
<div class="lbl" style="left:166px;width:150px;top:291.77px">Durumu</div>
<div class="inp" style="left:320px;top:288px;width:126.0px;height:20.0px;background:linear-gradient(#f0f0f0,#e2e2e2);border-color:#c6c6c6;"><div class="val" style="top:3.7px">Aktif</div><svg class="chev" viewBox="0 0 9 6"><path d="M1 1.2 L4.5 4.7 L8 1.2" fill="none" stroke="#3a3a3a" stroke-width="1.3"/></svg></div>
<div class="lbl" style="left:166px;width:150px;top:315.07px">Cari Kodu</div>
<div class="inp" style="left:320px;top:312px;width:126.0px;height:19.5px;"><div class="val" style="top:3.5px">CR00010</div><div class="btn" style="left:103px;top:2.5px;width:19.5px;height:14px;font-size:10px;font-weight:bold;text-align:center;line-height:12px;color:#333">?</div></div>
<div class="btn" style="left:450.5px;top:312.5px;width:17.5px;height:17.5px"></div>
<svg class="a" style="left:452px;top:314px" width="14" height="14" viewBox="0 0 14 14"><path d="M3 1.5h5l3 3v8h-8z" fill="#fff" stroke="#2a2a2a" stroke-width="1.2"/><path d="M8 1.5v3h3" fill="none" stroke="#2a2a2a" stroke-width="1"/><path d="M4.5 7h5M4.5 9h5M4.5 11h3" stroke="#555" stroke-width=".9"/></svg>
<div class="lbl" style="left:166px;width:150px;top:336.17px">Ticari Unvanı</div>
<div class="inp" style="left:320px;top:333px;width:254.5px;height:19.5px;"></div>
<div class="lbl" style="left:166px;width:150px;top:357.97px">Adı Soyadı</div>
<div class="inp" style="left:320px;top:355px;width:126.0px;height:19.3px;"><div class="val" style="top:3.4px">Harun</div></div>
<div class="inp" style="left:448.5px;top:355px;width:126.0px;height:19.3px;"><div class="val" style="top:3.4px">TÜRKMEN</div></div>
<div class="lbl" style="left:166px;width:150px;top:380.37px">Adresi</div>
<div class="inp" style="left:320px;top:376px;width:212.0px;height:48.5px;"><div style="position:absolute;right:0;top:0;width:16px;height:100%;background:#f0f0f0"></div><svg style="position:absolute;right:4px;top:6px" width="9" height="6" viewBox="0 0 9 6"><path d="M1 5 L4.5 1.5 L8 5" fill="none" stroke="#b8b8b8" stroke-width="1.2"/></svg><svg style="position:absolute;right:4px;bottom:6px" width="9" height="6" viewBox="0 0 9 6"><path d="M1 1 L4.5 4.5 L8 1" fill="none" stroke="#b8b8b8" stroke-width="1.2"/></svg></div>
<div class="btn" style="left:535px;top:377.5px;width:17.5px;height:20.5px"></div>
<svg class="a" style="left:537px;top:380px" width="14" height="15" viewBox="0 0 14 15"><defs><linearGradient id="tg" x1="0" y1="1" x2="1" y2="0"><stop offset="0" stop-color="#2a7a2a"/><stop offset="1" stop-color="#8ad88a"/></linearGradient></defs><path d="M3 14 L13 14 L13 4 Z" fill="url(#tg)"/></svg>
<div class="btn" style="left:555px;top:377.5px;width:18px;height:20.5px;border-color:#9fdde6;background:#e8f4f6"></div>
<div class="a" style="left:557.5px;top:381px;width:13px;height:13px;border:2px solid #2f5a5e;background:#fff"></div>
<div class="a" style="left:561.5px;top:385px;width:5px;height:5px;background:#b02020"></div>
<div class="btn" style="left:547px;top:403px;width:18px;height:20.5px"></div>
<svg class="a" style="left:549px;top:405px" width="14" height="16" viewBox="0 0 14 16"><path d="M7.5 1.5 L11.5 4 L10 7.5 L8.2 6.8 L6 11 L4.5 10 L6.8 6 L5.5 4.5Z" fill="#e02828"/><path d="M4.8 10.5 L3.5 13" stroke="#999" stroke-width="1"/></svg>
<div class="lbl" style="left:166px;width:150px;top:431.17px">Ülkesi / İli</div>
<div class="inp" style="left:320px;top:428px;width:126.0px;height:20.0px;"><svg class="chev" viewBox="0 0 9 6"><path d="M1 1.2 L4.5 4.7 L8 1.2" fill="none" stroke="#3a3a3a" stroke-width="1.3"/></svg></div>
<div class="inp" style="left:448.5px;top:428px;width:126.0px;height:19.7px;"><svg class="chev" viewBox="0 0 9 6"><path d="M1 1.2 L4.5 4.7 L8 1.2" fill="none" stroke="#3a3a3a" stroke-width="1.3"/></svg></div>
<div class="lbl" style="left:166px;width:150px;top:453.67px">İlçesi</div>
<div class="inp" style="left:320px;top:450px;width:126.0px;height:20.6px;"><svg class="chev" viewBox="0 0 9 6"><path d="M1 1.2 L4.5 4.7 L8 1.2" fill="none" stroke="#3a3a3a" stroke-width="1.3"/></svg></div>
<div class="btn" style="left:450px;top:451.5px;width:18px;height:17px"></div>
<svg class="a" style="left:452px;top:453px" width="14" height="14" viewBox="0 0 14 14"><path d="M2 1h7l3 3v9H2z" fill="#fff" stroke="#333" stroke-width="1"/><path d="M7 4v8M3 8h8" stroke="#18a018" stroke-width="3"/></svg>
<div class="lbl" style="left:166px;width:150px;top:474.87px">Grubu</div>
<div class="inp" style="left:320px;top:472px;width:126.0px;height:19.7px;"><svg class="chev" viewBox="0 0 9 6"><path d="M1 1.2 L4.5 4.7 L8 1.2" fill="none" stroke="#3a3a3a" stroke-width="1.3"/></svg></div>
<div class="btn" style="left:450px;top:473px;width:18px;height:17.5px;border-color:#9fdde6;background:#e0f2f4"></div>
<div class="a" style="left:453px;top:476px;width:12px;height:11.5px;border:1.5px solid #3a6266;background:#fff"></div>
<div class="a" style="left:457px;top:479.5px;width:1.5px;height:5px;background:#b02020"></div><div class="a" style="left:459.5px;top:479.5px;width:1.5px;height:5px;background:#b02020"></div>
<div class="lbl" style="left:166px;width:150px;top:496.37px">Ara Grubu</div>
<div class="inp" style="left:320px;top:493.2px;width:126.0px;height:19.8px;"><svg class="chev" viewBox="0 0 9 6"><path d="M1 1.2 L4.5 4.7 L8 1.2" fill="none" stroke="#3a3a3a" stroke-width="1.3"/></svg></div>
<div class="lbl" style="left:166px;width:150px;top:518.37px">Alt Grubu</div>
<div class="inp" style="left:320px;top:515.3px;width:126.0px;height:19.7px;"><svg class="chev" viewBox="0 0 9 6"><path d="M1 1.2 L4.5 4.7 L8 1.2" fill="none" stroke="#3a3a3a" stroke-width="1.3"/></svg></div>
<div class="lbl" style="left:527px;width:150px;top:291.82px">Telefon 1</div>
<div class="inp" style="left:680.5px;top:288.4px;width:132.0px;height:20.1px;"><div style="position:absolute;right:2px;top:2px;width:18px;height:14.5px;background:#f1ead8;border:1px solid #d8d2c0"></div><svg style="position:absolute;right:4px;top:3px" width="14" height="13" viewBox="0 0 14 13"><path d="M2.5 9.5 C0.5 6 2.5 1.5 7 1.5 C9 1.5 11 2 12 3 L11 5.5 L8.5 4.8 C6.5 4.5 5 6.5 5.8 8.6 Z" fill="#b82a14"/><path d="M5 7.5 L12.5 7.5 L12.5 12 L4.5 12 Z" fill="#c0301a"/><path d="M6 8.5 L11 8.5" stroke="#f0a040" stroke-width="1"/><path d="M3 4 C4 3 5 2.5 6.5 2.5" stroke="#f08050" stroke-width="1" fill="none"/></svg></div>
<div class="lbl" style="left:527px;width:150px;top:315.12px">Telefon 2</div>
<div class="inp" style="left:680.5px;top:312.2px;width:132.0px;height:19.1px;"><div style="position:absolute;right:2px;top:2px;width:18px;height:14.5px;background:#f1ead8;border:1px solid #d8d2c0"></div><svg style="position:absolute;right:4px;top:3px" width="14" height="13" viewBox="0 0 14 13"><path d="M2.5 9.5 C0.5 6 2.5 1.5 7 1.5 C9 1.5 11 2 12 3 L11 5.5 L8.5 4.8 C6.5 4.5 5 6.5 5.8 8.6 Z" fill="#b82a14"/><path d="M5 7.5 L12.5 7.5 L12.5 12 L4.5 12 Z" fill="#c0301a"/><path d="M6 8.5 L11 8.5" stroke="#f0a040" stroke-width="1"/><path d="M3 4 C4 3 5 2.5 6.5 2.5" stroke="#f08050" stroke-width="1" fill="none"/></svg></div>
<div class="lbl" style="left:527px;width:150px;top:336.27px">Ev Telefonu</div>
<div class="inp" style="left:680.5px;top:333.4px;width:132.0px;height:19.0px;"><div style="position:absolute;right:2px;top:2px;width:18px;height:14.5px;background:#f1ead8;border:1px solid #d8d2c0"></div><svg style="position:absolute;right:4px;top:3px" width="14" height="13" viewBox="0 0 14 13"><path d="M2.5 9.5 C0.5 6 2.5 1.5 7 1.5 C9 1.5 11 2 12 3 L11 5.5 L8.5 4.8 C6.5 4.5 5 6.5 5.8 8.6 Z" fill="#b82a14"/><path d="M5 7.5 L12.5 7.5 L12.5 12 L4.5 12 Z" fill="#c0301a"/><path d="M6 8.5 L11 8.5" stroke="#f0a040" stroke-width="1"/><path d="M3 4 C4 3 5 2.5 6.5 2.5" stroke="#f08050" stroke-width="1" fill="none"/></svg></div>
<div class="lbl" style="left:527px;width:150px;top:358.07px">Cep Telefonu 1</div>
<div class="inp" style="left:680.5px;top:355.2px;width:132.0px;height:19.0px;"><div style="position:absolute;right:2px;top:2px;width:18px;height:14.5px;background:#f1ead8;border:1px solid #d8d2c0"></div><svg style="position:absolute;right:4px;top:3px" width="14" height="13" viewBox="0 0 14 13"><path d="M2.5 9.5 C0.5 6 2.5 1.5 7 1.5 C9 1.5 11 2 12 3 L11 5.5 L8.5 4.8 C6.5 4.5 5 6.5 5.8 8.6 Z" fill="#b82a14"/><path d="M5 7.5 L12.5 7.5 L12.5 12 L4.5 12 Z" fill="#c0301a"/><path d="M6 8.5 L11 8.5" stroke="#f0a040" stroke-width="1"/><path d="M3 4 C4 3 5 2.5 6.5 2.5" stroke="#f08050" stroke-width="1" fill="none"/></svg></div>
<div class="lbl" style="left:527px;width:150px;top:381.97px">Faks</div>
<div class="inp" style="left:680.5px;top:378.6px;width:132.0px;height:20.0px;"></div>
<div class="lbl" style="left:527px;width:150px;top:406.87px">Özel Kodu 1</div>
<div class="inp" style="left:680.5px;top:404px;width:132.0px;height:19.0px;border-color:#a8c4e4;border-bottom-color:#a8c4e4;box-shadow:none;"><svg style="position:absolute;right:3px;top:2px" width="16" height="15" viewBox="0 0 16 15"><rect x="1" y="2" width="14" height="12" rx="1" fill="#2d3338"/><circle cx="8" cy="8" r="4.2" fill="#3ab8d8"/><circle cx="8" cy="8" r="2" fill="#a0e8f8"/><rect x="1" y="2" width="14" height="2" fill="#606870"/></svg></div>
<div class="lbl" style="left:527px;width:150px;top:431.32px">Özel Kodu 2</div>
<div class="inp" style="left:680.5px;top:428.3px;width:132.0px;height:19.3px;"><svg style="position:absolute;right:3px;top:2px" width="16" height="15" viewBox="0 0 16 15"><rect x="1" y="2" width="14" height="12" rx="1" fill="#2d3338"/><circle cx="8" cy="8" r="4.2" fill="#3ab8d8"/><circle cx="8" cy="8" r="2" fill="#a0e8f8"/><rect x="1" y="2" width="14" height="2" fill="#606870"/></svg></div>
<div class="lbl" style="left:527px;width:150px;top:452.97px">Özel Kodu 3</div>
<div class="inp" style="left:680.5px;top:450.2px;width:132.0px;height:18.8px;"><svg style="position:absolute;right:3px;top:2px" width="16" height="15" viewBox="0 0 16 15"><rect x="1" y="2" width="14" height="12" rx="1" fill="#2d3338"/><circle cx="8" cy="8" r="4.2" fill="#3ab8d8"/><circle cx="8" cy="8" r="2" fill="#a0e8f8"/><rect x="1" y="2" width="14" height="2" fill="#606870"/></svg></div>
<div class="lbl" style="left:527px;width:150px;top:474.92px">Kayıt Tarihi</div>
<div class="inp" style="left:680.5px;top:471.7px;width:132.0px;height:19.7px;"><div class="val" style="top:3.5px">29.11.2016</div><svg style="position:absolute;right:3px;top:1px" width="14" height="17" viewBox="0 0 14 17"><rect x="1" y="2.5" width="12" height="13" rx="1" fill="#fbfbf4" stroke="#aaa" stroke-width=".8"/><rect x="1" y="2.5" width="12" height="3.5" fill="#f0c838"/><path d="M3.5 1v3M10.5 1v3" stroke="#888" stroke-width="1"/><text x="7" y="14" font-size="7" font-weight="bold" text-anchor="middle" fill="#333" font-family="Liberation Sans">7</text></svg></div>
<div class="lbl" style="left:527px;width:150px;top:496.77px">Özel Tarih</div>
<div class="inp" style="left:680.5px;top:493.5px;width:132.0px;height:19.8px;"><div class="val" style="top:3.6px">&nbsp;.&nbsp;&nbsp;.</div><svg style="position:absolute;right:3px;top:1px" width="14" height="17" viewBox="0 0 14 17"><rect x="1" y="2.5" width="12" height="13" rx="1" fill="#fbfbf4" stroke="#aaa" stroke-width=".8"/><rect x="1" y="2.5" width="12" height="3.5" fill="#f0c838"/><path d="M3.5 1v3M10.5 1v3" stroke="#888" stroke-width="1"/><text x="7" y="14" font-size="7" font-weight="bold" text-anchor="middle" fill="#333" font-family="Liberation Sans">7</text></svg></div>
<div class="lbl" style="left:527px;width:150px;top:518.37px">Vergi Dairesi</div>
<div class="inp" style="left:680.5px;top:515px;width:132.0px;height:20.0px;"></div>
<div class="lbl" style="left:527px;width:150px;top:540.47px">Vergi No</div>
<div class="inp" style="left:680.5px;top:537.5px;width:132.0px;height:19.2px;"></div>
<div class="lbl" style="left:527px;width:150px;top:562.82px">T.C. Kimlik No</div>
<div class="inp" style="left:680.5px;top:559.3px;width:132.0px;height:20.3px;"></div>
<svg class="a" style="left:815px;top:356px" width="20" height="17" viewBox="0 0 20 17"><path d="M2 16 L19 16 L19 2" fill="none" stroke="#1a2a4a" stroke-width="1.6"/><path d="M4 5 C5 2 9 2 11 5 L14 9 C15 12 12 14 10 12 Z" fill="#3a78c8"/><path d="M3 4 L7 2" stroke="#2a4a78" stroke-width="2"/></svg>
<div class="a" style="left:868px;top:294px;width:147px;height:178.5px;border:1px solid #c4c4c4;border-top:2px solid #c8c8c8;background:#fff"></div>
<div class="a" style="left:868px;top:473px;width:147px;height:70px;border:1px solid #c4c4c4;background:#fff"></div>
<svg class="a" style="left:883px;top:478px" width="18" height="17" viewBox="0 0 18 17"><path d="M2 8 L7 3 L10 3 L10 6 L5 11 L2 11Z" fill="#1a9090"/><path d="M4 7 L8 3" stroke="#6cd0d0" stroke-width="1"/><path d="M13 3v7M10.5 7.5 L13 10.5 L15.5 7.5" fill="none" stroke="#111" stroke-width="1.5"/><rect x="11" y="12" width="4.5" height="4.5" fill="#c02020"/></svg>
<div class="a" style="left:931px;top:479px;width:16px;height:14px;border:2px solid #5a6a70;border-radius:2px;background:#5fb8c0"></div><div class="a" style="left:934px;top:483px;width:10px;height:5px;background:#a8e4e8;border:1px solid #4a8890"></div>
<svg class="a" style="left:979px;top:479px" width="15" height="15" viewBox="0 0 15 15"><path d="M2 2 L13 13 M13 2 L2 13" stroke="#a0141c" stroke-width="2"/></svg>
<div class="a" style="left:890px;top:505px;width:100px;text-align:center;font-size:10px;line-height:12px;color:#3a3a3a">Web Cam</div>
<svg class="a" style="left:231px;top:624px" width="26" height="26" viewBox="0 0 26 26"><defs><linearGradient id="b1" x1="0.2" y1="0" x2="0.75" y2="1"><stop offset="0" stop-color="#d0ecd0"/><stop offset=".5" stop-color="#3cb43a"/><stop offset="1" stop-color="#13861a"/></linearGradient></defs><circle cx="13" cy="13" r="11" fill="url(#b1)"/><path d="M6.5 13 L12 8 L12 11 L19 11 L19 15 L12 15 L12 18 Z" fill="#e4f4e4"/></svg>
<svg class="a" style="left:331px;top:624px" width="26" height="26" viewBox="0 0 26 26"><defs><linearGradient id="b2" x1="0.2" y1="0" x2="0.75" y2="1"><stop offset="0" stop-color="#d0ecd0"/><stop offset=".5" stop-color="#3cb43a"/><stop offset="1" stop-color="#13861a"/></linearGradient></defs><circle cx="13" cy="13" r="11" fill="url(#b2)"/><path d="M19.5 13 L14 8 L14 11 L7 11 L7 15 L14 15 L14 18 Z" fill="#e4f4e4"/></svg>
<svg class="a" style="left:441px;top:624px" width="26" height="26" viewBox="0 0 26 26"><defs><linearGradient id="b3" x1="0.2" y1="0" x2="0.75" y2="1"><stop offset="0" stop-color="#d0ecd0"/><stop offset=".5" stop-color="#3cb43a"/><stop offset="1" stop-color="#13861a"/></linearGradient></defs><circle cx="13" cy="13" r="11" fill="url(#b3)"/><path d="M13 6.5v13M6.5 13h13" stroke="#e4f4e4" stroke-width="3.6"/></svg>
<svg class="a" style="left:547px;top:624px" width="26" height="26" viewBox="0 0 26 26"><defs><linearGradient id="b4" x1="0.2" y1="0" x2="0.75" y2="1"><stop offset="0" stop-color="#f8b0b0"/><stop offset=".5" stop-color="#e02020"/><stop offset="1" stop-color="#b00c0c"/></linearGradient></defs><circle cx="13" cy="13" r="11" fill="url(#b4)"/><rect x="6" y="11" width="14" height="4.2" fill="#fff"/></svg>
<svg class="a" style="left:634.5px;top:624px" width="26" height="26" viewBox="0 0 26 26"><defs><linearGradient id="b5" x1="0.2" y1="0" x2="0.75" y2="1"><stop offset="0" stop-color="#d0ecd0"/><stop offset=".5" stop-color="#3cb43a"/><stop offset="1" stop-color="#13861a"/></linearGradient></defs><circle cx="13" cy="13" r="11" fill="url(#b5)"/><path d="M9 19 L10 13 L16 7 L18 9 L12 15Z" fill="#e8f6e8"/><path d="M8 20 L15 20" stroke="#c8ecc8" stroke-width="1.2"/></svg>
<svg class="a" style="left:737px;top:626px" width="28" height="22" viewBox="0 0 28 22"><path d="M2 11 L6 8 L11 13 L23 2 L27 6 L11 20 Z" fill="#c4c4c4" stroke="#aaa" stroke-width=".8"/></svg>
<svg class="a" style="left:839.5px;top:624px" width="26" height="26" viewBox="0 0 26 26"><defs><linearGradient id="b6" x1="0.2" y1="0" x2="0.75" y2="1"><stop offset="0" stop-color="#ececec"/><stop offset=".5" stop-color="#cacaca"/><stop offset="1" stop-color="#b0b0b0"/></linearGradient></defs><circle cx="13" cy="13" r="11" fill="url(#b6)"/><path d="M8.5 8.5 L17.5 17.5 M17.5 8.5 L8.5 17.5" stroke="#f0f0f0" stroke-width="3.4"/></svg>
<svg class="a" style="left:945px;top:624px" width="26" height="26" viewBox="0 0 26 26"><defs><linearGradient id="b7" x1="0.2" y1="0" x2="0.75" y2="1"><stop offset="0" stop-color="#d0ecd0"/><stop offset=".5" stop-color="#3cb43a"/><stop offset="1" stop-color="#13861a"/></linearGradient></defs><circle cx="13" cy="13" r="11" fill="url(#b7)"/><path d="M7.5 12 A5.5 5.5 0 0 1 17 9" fill="none" stroke="#e4f4e4" stroke-width="2.6"/><path d="M15 6 L19.5 8.5 L16 11.5Z" fill="#e4f4e4"/><path d="M18.5 14 A5.5 5.5 0 0 1 9 17" fill="none" stroke="#e4f4e4" stroke-width="2.6"/><path d="M11 20 L6.5 17.5 L10 14.5Z" fill="#e4f4e4"/></svg>
<svg class="a" style="left:1043px;top:623px" width="22" height="27" viewBox="0 0 22 27"><defs><linearGradient id="ua" x1="0" x2="1"><stop offset="0" stop-color="#7ee87a"/><stop offset=".5" stop-color="#18a81a"/><stop offset="1" stop-color="#0a6a0e"/></linearGradient></defs><path d="M11 1 L20 11 L14.5 11 L14.5 25 L7.5 25 L7.5 11 L2 11 Z" fill="url(#ua)"/><ellipse cx="11" cy="25.5" rx="7" ry="1.2" fill="#000" opacity=".15"/></svg>
<div class="bb" style="left:262px;top:632px;color:#2a2a2a">Önceki</div>
<div class="bb" style="left:363.3px;top:632px;color:#2a2a2a">Sonraki</div>
<div class="bb" style="left:471.8px;top:632px;color:#2a2a2a">Ekle</div>
<div class="bb" style="left:578px;top:632px;color:#2a2a2a">Sil</div>
<div class="bb" style="left:666.4px;top:632px;color:#2a2a2a">Düzenle</div>
<div class="bb" style="left:769.4px;top:632px;color:#b4b4b4">Kaydet</div>
<div class="bb" style="left:871.8px;top:632px;color:#b4b4b4">Vazgeç</div>
<div class="bb" style="left:976.5px;top:632px;color:#2a2a2a">Yenile</div>
<svg class="a" style="left:710px;top:418px" width="14" height="22" viewBox="0 0 14 22"><path d="M1.5 1.5 L1.5 17 L5 13.5 L7.8 19.5 L10 18.5 L7.3 12.6 L12 12.6 Z" fill="#fff" stroke="#333" stroke-width="1" stroke-linejoin="round"/></svg>
</body></html>
